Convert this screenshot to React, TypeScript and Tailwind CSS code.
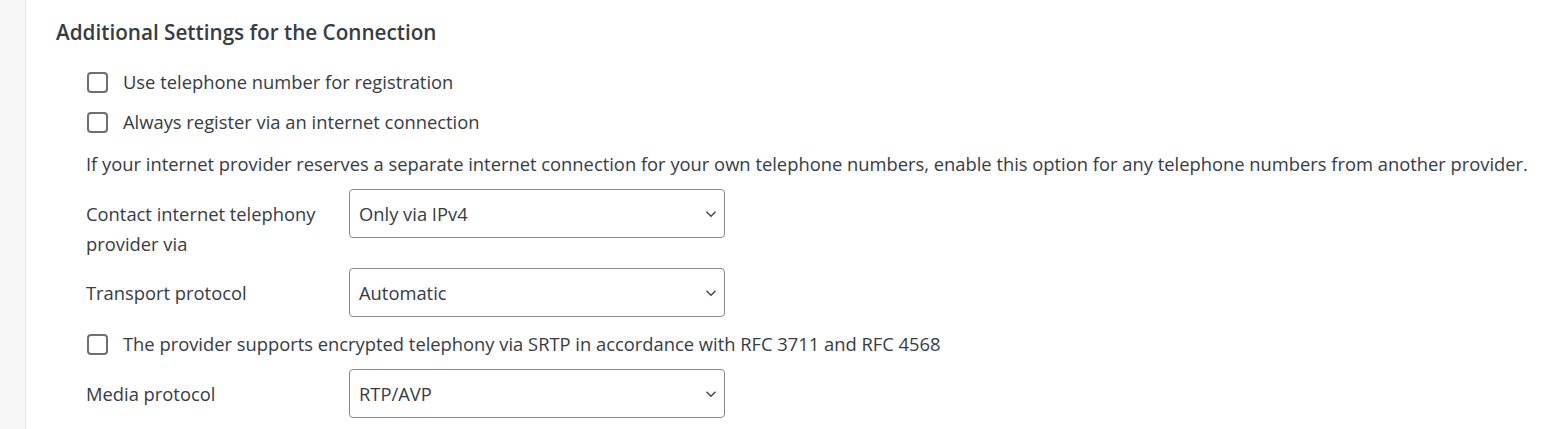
import React from 'react';

const Check: React.FC<{ label: string }> = ({ label }) => (
  <label className="flex items-center h-10 gap-[15px] pl-[31px]">
    <span className="w-[21px] h-[21px] rounded-[4px] border-2 border-[#6f6f6f] bg-white shrink-0" />
    <span>{label}</span>
  </label>
);

const Chevron = () => (
  <svg width="12" height="8" viewBox="0 0 12 8" fill="none" className="absolute right-[7px] top-1/2 -translate-y-1/2">
    <path d="M1.5 1.8 6 6.2l4.5-4.4" stroke="#444" strokeWidth="1.4" />
  </svg>
);

const SelectRow: React.FC<{ label: React.ReactNode; value: string }> = ({ label, value }) => (
  <div className="flex items-start pl-[30px]">
    <div className="w-[263px] pt-[10px] leading-[30px]">{label}</div>
    <div className="relative w-[376px] h-[49px] border border-[#8a8a8a] rounded-[4px] flex items-center pl-[9px]">
      {value}
      <Chevron />
    </div>
  </div>
);

export default function App() {
  return (
    <div className="flex min-h-[429px] bg-white text-[#353c45] text-[18.35px]" style={{ fontFamily: '"Open Sans", sans-serif' }}>
      <div className="w-[26px] shrink-0 bg-[#f7f7f7] border-r border-[#e4e4e4]" />
      <div className="pl-[30px] pt-[18px]">
        <h2 className="text-[20.7px] font-semibold leading-[28px] mb-[16px]">Additional Settings for the Connection</h2>
        <Check label="Use telephone number for registration" />
        <Check label="Always register via an internet connection" />
        <p className="pl-[30px] leading-[30px] mt-[7px] mb-[10px]">
          If your internet provider reserves a separate internet connection for your own telephone numbers, enable this option for any telephone numbers from another provider.
        </p>
        <SelectRow label={<>Contact internet telephony<br />provider via</>} value="Only via IPv4" />
        <div className="mt-[9px]">
          <SelectRow label="Transport protocol" value="Automatic" />
        </div>
        <div className="mt-[7px]">
          <Check label="The provider supports encrypted telephony via SRTP in accordance with RFC 3711 and RFC 4568" />
        </div>
        <div className="mt-[5px]">
          <SelectRow label="Media protocol" value="RTP/AVP" />
        </div>
      </div>
    </div>
  );
}
